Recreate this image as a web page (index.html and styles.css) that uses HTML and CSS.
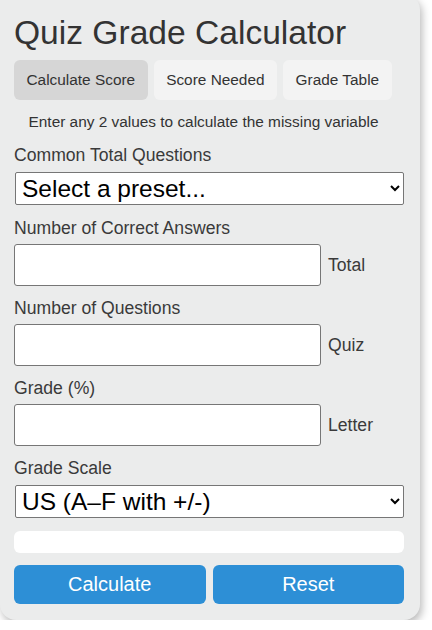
FILE: index.html
```html
<!DOCTYPE html>
<html lang="en">
<head>
<meta charset="utf-8">
<title>Quiz Grade Calculator</title>
<link rel="stylesheet" href="styles.css">
</head>
<body>
<div class="card">
  <h1 class="title">Quiz Grade Calculator</h1>
  <div class="tabs">
    <button class="tab active">Calculate Score</button>
    <button class="tab">Score Needed</button>
    <button class="tab">Grade Table</button>
  </div>
  <p class="hint">Enter any 2 values to calculate the missing variable</p>

  <div class="field field-select">
    <label class="label">Common Total Questions</label>
    <select class="select">
      <option>Select a preset...</option>
    </select>
  </div>

  <div class="field">
    <label class="label">Number of Correct Answers</label>
    <div class="input-row">
      <input class="input" type="text">
      <span class="unit">Total</span>
    </div>
  </div>

  <div class="field">
    <label class="label">Number of Questions</label>
    <div class="input-row">
      <input class="input" type="text">
      <span class="unit">Quiz</span>
    </div>
  </div>

  <div class="field">
    <label class="label">Grade (%)</label>
    <div class="input-row">
      <input class="input" type="text">
      <span class="unit">Letter</span>
    </div>
  </div>

  <div class="field field-select">
    <label class="label">Grade Scale</label>
    <select class="select">
      <option>US (A–F with +/-)</option>
    </select>
  </div>

  <div class="result"></div>

  <div class="actions">
    <button class="btn">Calculate</button>
    <button class="btn">Reset</button>
  </div>
</div>
</body>
</html>
```

FILE: styles.css
```css
body {
  margin: 0;
  background: #ffffff;
  font-family: "Liberation Sans", Arial, sans-serif;
  color: #333333;
}

.card {
  width: 420px;
  box-sizing: border-box;
  margin-top: -6px;
  padding: 20px 16px 16px 14px;
  background: #ebecec;
  border-radius: 0 16px 16px 16px;
  box-shadow: 2px 4px 8px rgba(0, 0, 0, 0.28);
}

.title {
  margin: 0 0 8px;
  font-size: 33.6px;
  font-weight: normal;
  line-height: normal;
  color: #333333;
}

.tabs {
  display: flex;
  gap: 6px;
}

.tab {
  height: 40px;
  padding: 0 12.5px;
  border: none;
  border-radius: 6px;
  background: #f3f3f3;
  color: #333333;
  font-family: "Liberation Sans", Arial, sans-serif;
  font-size: 15.4px;
}

.tab.active {
  background: #d6d6d6;
}

.hint {
  margin: 13px 0 14px;
  padding-right: 11px;
  font-size: 15.4px;
  text-align: center;
  color: #333333;
}

.field {
  margin-bottom: 12px;
}

.label {
  display: block;
  margin-bottom: 6px;
  font-size: 17.6px;
  line-height: 20px;
  color: #3a3a3a;
}

.field-select {
  margin-bottom: 13px;
}

.field-select .label {
  margin-bottom: 7px;
}

.select {
  display: block;
  width: calc(100% - 1px);
  height: 33px;
  margin-left: 1px;
  padding-left: 2px;
  box-sizing: border-box;
  border: 1px solid #767676;
  border-radius: 2px;
  background: #ffffff;
  color: #000000;
  font-family: "Liberation Sans", Arial, sans-serif;
  font-size: 24.5px;
}

.input-row {
  display: flex;
  align-items: center;
  gap: 7px;
}

.input {
  width: 307px;
  height: 42px;
  box-sizing: border-box;
  border: 1px solid #767676;
  border-radius: 3px;
  background: #ffffff;
  font-size: 17.6px;
}

.unit {
  font-size: 17.6px;
  color: #3a3a3a;
}

.result {
  height: 22px;
  margin-bottom: 12px;
  background: #ffffff;
  border-radius: 6px;
}

.actions {
  display: grid;
  grid-template-columns: 1fr 1fr;
  gap: 7px;
}

.btn {
  height: 39px;
  border: none;
  border-radius: 6px;
  background: #2d8fd6;
  color: #ffffff;
  font-family: "Liberation Sans", Arial, sans-serif;
  font-size: 20px;
}
```
